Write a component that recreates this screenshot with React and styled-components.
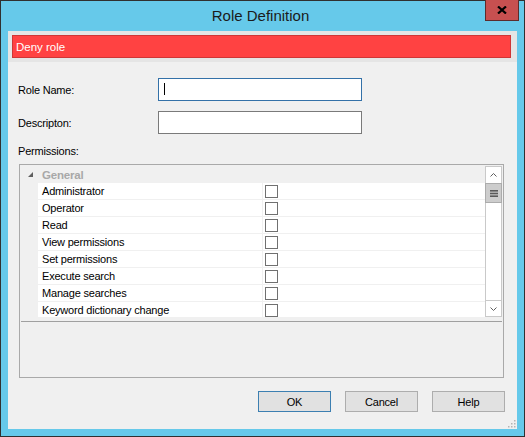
import React from 'react'
import styled, { createGlobalStyle } from 'styled-components'

const GlobalStyle = createGlobalStyle`
  html, body { margin: 0; padding: 0; background: #ffffff; }
  body { font-family: "Liberation Sans", Arial, sans-serif; }
`

const permissions = [
  'Administrator',
  'Operator',
  'Read',
  'View permissions',
  'Set permissions',
  'Execute search',
  'Manage searches',
  'Keyword dictionary change',
]

const RoleDefinition = () => {
  return (
    <Window>
      <TitleBar>
        <Title>Role Definition</Title>
        <CloseButton>
          <svg width="10" height="8" viewBox="0 0 10 8">
            <path d="M1 0.5 L9 7.5 M9 0.5 L1 7.5" stroke="#000" strokeWidth="2.2" />
          </svg>
        </CloseButton>
      </TitleBar>

      <Client>
        <BannerPanel>
          <Banner>Deny role</Banner>
        </BannerPanel>

        <Form>
          <FieldRow>
            <Label>Role Name:</Label>
            <TextBox $focused>
              <Caret />
            </TextBox>
          </FieldRow>
          <FieldRow>
            <Label>Descripton:</Label>
            <TextBox />
          </FieldRow>

          <PermLabel>Permissions:</PermLabel>

          <PropertyGrid>
            <Viewport>
              <Rows>
                <CategoryRow>
                  <svg width="5" height="5" viewBox="0 0 5 5">
                    <polygon points="5,0 5,5 0,5" fill="#5f5f5f" />
                  </svg>
                  <CategoryName>General</CategoryName>
                </CategoryRow>
                {permissions.map((p) => (
                  <PropRow key={p}>
                    <NameCell>{p}</NameCell>
                    <ValueCell>
                      <Checkbox />
                    </ValueCell>
                  </PropRow>
                ))}
              </Rows>
              <ScrollBar>
                <ScrollButton>
                  <svg width="7" height="4" viewBox="0 0 7 4">
                    <path d="M0.5 3.5 L3.5 0.5 L6.5 3.5" stroke="#606060" fill="none" strokeWidth="1" />
                  </svg>
                </ScrollButton>
                <Thumb>
                  <svg width="8" height="7" viewBox="0 0 8 7">
                    <rect x="0" y="0" width="8" height="1.6" fill="#5a5a5a" />
                    <rect x="0" y="2.7" width="8" height="1.6" fill="#5a5a5a" />
                    <rect x="0" y="5.4" width="8" height="1.6" fill="#5a5a5a" />
                  </svg>
                </Thumb>
                <Track />
                <ScrollButton $down>
                  <svg width="7" height="4" viewBox="0 0 7 4">
                    <path d="M0.5 0.5 L3.5 3.5 L6.5 0.5" stroke="#606060" fill="none" strokeWidth="1" />
                  </svg>
                </ScrollButton>
              </ScrollBar>
            </Viewport>
            <Splitter />
            <DescPane />
          </PropertyGrid>
        </Form>

        <Footer>
          <Button $default>OK</Button>
          <Button>Cancel</Button>
          <Button>Help</Button>
        </Footer>

        <Grip width="9" height="9" viewBox="0 0 9 9">
          <rect x="7" y="1" width="1.5" height="1.5" fill="#b4b4b4" />
          <rect x="7" y="4" width="1.5" height="1.5" fill="#b4b4b4" />
          <rect x="4" y="4" width="1.5" height="1.5" fill="#b4b4b4" />
          <rect x="7" y="7" width="1.5" height="1.5" fill="#b4b4b4" />
          <rect x="4" y="7" width="1.5" height="1.5" fill="#b4b4b4" />
          <rect x="1" y="7" width="1.5" height="1.5" fill="#b4b4b4" />
        </Grip>
      </Client>
    </Window>
  )
}

const Window = styled.div`
  width: 525px;
  height: 437px;
  box-sizing: border-box;
  border: 1px solid #303030;
  background-color: #66c9ea;
  display: flex;
  flex-direction: column;
`

const TitleBar = styled.div`
  height: 30px;
  flex-shrink: 0;
  display: grid;
  grid-template-columns: 1fr auto 1fr;
  align-items: start;
`

const Title = styled.div`
  grid-column: 2;
  line-height: 30px;
  font-size: 15px;
  margin-right: 4px;
  color: #1b1b1b;
`

const CloseButton = styled.div`
  grid-column: 3;
  justify-self: end;
  margin-top: -1px;
  margin-right: 5px;
  width: 34px;
  height: 21px;
  box-sizing: border-box;
  border: 1px solid #5c2c2c;
  border-top: none;
  background-color: #c75050;
  display: flex;
  align-items: center;
  justify-content: center;
`

const Client = styled.div`
  flex: 1;
  margin: 0 7px 7px;
  background-color: #f0f0f0;
  position: relative;
  display: flex;
  flex-direction: column;
`

const BannerPanel = styled.div`
  background-color: #e5e5e5;
  padding: 4px 6px 4px 4px;
`

const Banner = styled.div`
  height: 23px;
  box-sizing: border-box;
  border: 1px solid #cf3636;
  background-color: #ff4242;
  color: #ffffff;
  font-size: 11.5px;
  padding-left: 3px;
  display: flex;
  align-items: center;
`

const Form = styled.div`
  padding: 16px 0 0 10px;
  display: flex;
  flex-direction: column;
`

const FieldRow = styled.div`
  display: grid;
  grid-template-columns: 140px 204px;
  align-items: center;
  & + & {
    margin-top: 10px;
  }
`

const Label = styled.div`
  font-size: 11px;
  letter-spacing: -0.2px;
  color: #000000;
`

const TextBox = styled.div`
  height: 23px;
  box-sizing: border-box;
  border: 1px solid ${(p) => (p.$focused ? '#3471a8' : '#7a7a7a')};
  background-color: #ffffff;
  display: flex;
  align-items: center;
  padding-left: 5px;
`

const Caret = styled.span`
  width: 1px;
  height: 12px;
  margin-top: -2px;
  background-color: #000000;
`

const PermLabel = styled.div`
  margin-top: 10px;
  line-height: 14px;
  font-size: 11px;
  letter-spacing: -0.2px;
`

const PropertyGrid = styled.div`
  margin: 6px 13px 0 1px;
  height: 214px;
  box-sizing: border-box;
  border: 1px solid #a9a9a9;
  background-color: #f0f0f0;
  display: flex;
  flex-direction: column;
`

const Viewport = styled.div`
  height: 156px;
  box-sizing: border-box;
  padding: 1px 1px 4px 0;
  display: flex;
  flex-shrink: 0;
`

const Rows = styled.div`
  flex: 1;
  overflow: hidden;
  display: flex;
  flex-direction: column;
`

const CategoryRow = styled.div`
  height: 17px;
  flex-shrink: 0;
  display: flex;
  align-items: center;
  padding-left: 8px;
`

const CategoryName = styled.span`
  margin-left: 9px;
  font-size: 11.5px;
  font-weight: bold;
  letter-spacing: -0.2px;
  color: #a8a8a8;
`

const PropRow = styled.div`
  height: 17px;
  flex-shrink: 0;
  display: flex;
  padding-left: 18px;
`

const NameCell = styled.div`
  width: 224px;
  height: 16px;
  box-sizing: border-box;
  background-color: #ffffff;
  padding-left: 4px;
  font-size: 11px;
  letter-spacing: -0.2px;
  line-height: 16px;
  white-space: nowrap;
  color: #000000;
`

const ValueCell = styled.div`
  flex: 1;
  height: 16px;
  margin-left: 1px;
  background-color: #ffffff;
  display: flex;
  align-items: center;
  padding-left: 2px;
`

const Checkbox = styled.div`
  width: 13px;
  height: 13px;
  box-sizing: border-box;
  border: 1px solid #707070;
  background-color: #ffffff;
`

const ScrollBar = styled.div`
  width: 17px;
  box-sizing: border-box;
  border: 1px solid #c9c9c9;
  background-color: #ffffff;
  display: flex;
  flex-direction: column;
`

const ScrollButton = styled.div`
  height: 16px;
  flex-shrink: 0;
  box-sizing: border-box;
  border-top: ${(p) => (p.$down ? '1px solid #c9c9c9' : 'none')};
  display: flex;
  align-items: center;
  justify-content: center;
`

const Thumb = styled.div`
  height: 20px;
  margin: 0 -1px;
  flex-shrink: 0;
  box-sizing: border-box;
  border: 1px solid #acacac;
  background-color: #cdcdcd;
  display: flex;
  align-items: center;
  justify-content: center;
`

const Track = styled.div`
  flex: 1;
`

const Splitter = styled.div`
  height: 1px;
  margin: 0 1px;
  background-color: #a0a0a0;
`

const DescPane = styled.div`
  flex: 1;
`

const Footer = styled.div`
  display: flex;
  justify-content: flex-end;
  gap: 14px;
  padding: 13px 12px 0 0;
`

const Button = styled.div`
  width: 73px;
  height: 21px;
  box-sizing: border-box;
  border: 1px solid ${(p) => (p.$default ? '#3c7fb1' : '#adadad')};
  background-color: #e1e1e1;
  display: flex;
  align-items: center;
  justify-content: center;
  font-size: 11px;
  letter-spacing: -0.2px;
  color: #000000;
`

const Grip = styled.svg`
  position: absolute;
  right: 1px;
  bottom: 1px;
`

const App = () => (
  <>
    <GlobalStyle />
    <RoleDefinition />
  </>
)

export default App
